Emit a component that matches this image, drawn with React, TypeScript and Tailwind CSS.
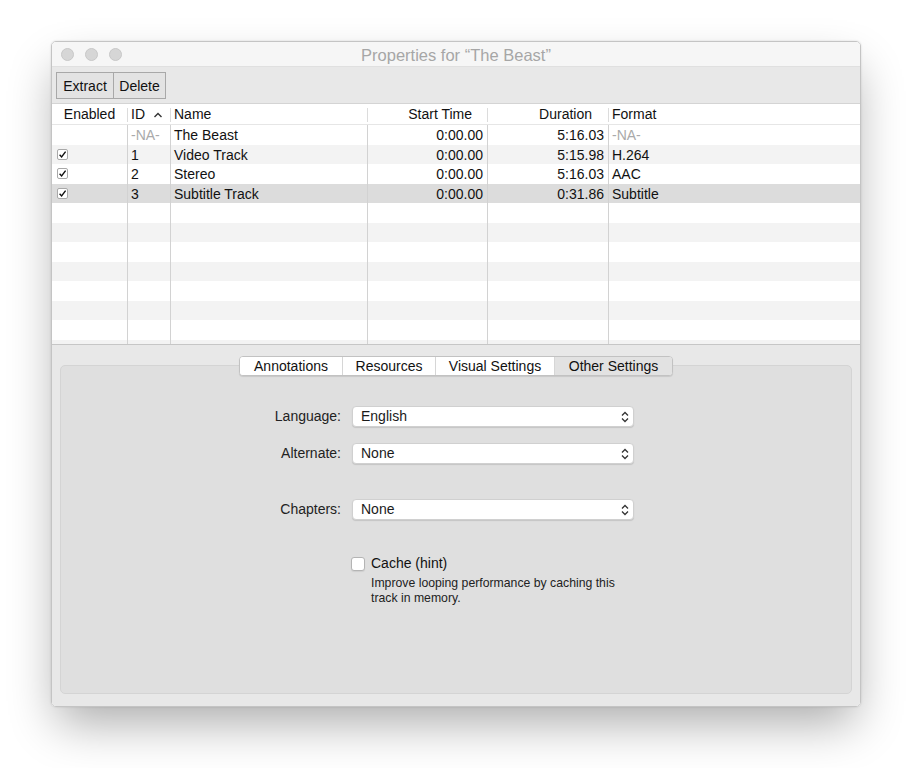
import React from 'react';

type Row = {
  enabled?: boolean;
  id?: string;
  name?: string;
  start?: string;
  duration?: string;
  format?: string;
  selected?: boolean;
};

const rows: Row[] = [
  { id: '-NA-', name: 'The Beast', start: '0:00.00', duration: '5:16.03', format: '-NA-' },
  { enabled: true, id: '1', name: 'Video Track', start: '0:00.00', duration: '5:15.98', format: 'H.264' },
  { enabled: true, id: '2', name: 'Stereo', start: '0:00.00', duration: '5:16.03', format: 'AAC' },
  { enabled: true, id: '3', name: 'Subtitle Track', start: '0:00.00', duration: '0:31.86', format: 'Subtitle', selected: true },
  {}, {}, {}, {}, {}, {}, {}, {},
];

const Check = () => (
  <span className="w-[11px] h-[11px] rounded-[2px] border border-[#a8a8a8] bg-white flex items-center justify-center">
    <svg width="9" height="9" viewBox="0 0 9 9">
      <path d="M1.6 4.8 L3.6 6.9 L7.6 1.6" fill="none" stroke="#111" strokeWidth="1.4" />
    </svg>
  </span>
);

const Chevrons = () => (
  <svg width="10" height="14" viewBox="0 0 10 14">
    <path d="M2 5.5 L5 2.5 L8 5.5" fill="none" stroke="#333" strokeWidth="1.3" />
    <path d="M2 8.5 L5 11.5 L8 8.5" fill="none" stroke="#333" strokeWidth="1.3" />
  </svg>
);

const Popup = ({ label, value }: { label: string; value: string }) => (
  <div className="flex items-center">
    <div className="w-[280px] text-right text-[14px] text-[#222]">{label}</div>
    <div className="ml-[11px] w-[282px] h-[21px] bg-white rounded-[4px] border border-[#d0d0d0] shadow-[0_1px_1px_rgba(0,0,0,0.12)] flex items-center justify-between pl-[8px] pr-[3px] text-[14px] text-[#1a1a1a]">
      <span>{value}</span>
      <Chevrons />
    </div>
  </div>
);

const tabs = [
  { label: 'Annotations', w: 'w-[102px]' },
  { label: 'Resources', w: 'w-[93px]' },
  { label: 'Visual Settings', w: 'w-[119px]' },
  { label: 'Other Settings', w: 'w-[118px]', active: true },
];

export default function App() {
  return (
    <div className="min-h-[768px] bg-white pl-[51px] pt-[41px] font-['Liberation_Sans','Arial',sans-serif]">
      <div className="w-[810px] h-[666px] rounded-[5px] border border-[#c4c4c4] overflow-hidden flex flex-col shadow-[0_22px_45px_-6px_rgba(0,0,0,0.33),0_0_2px_rgba(0,0,0,0.15)]">
        {/* Title bar */}
        <div className="h-[25px] bg-[#f6f6f6] border-b border-[#e0e0e0] flex items-center relative">
          <div className="flex gap-[11px] pl-[9px]">
            <span className="w-[13px] h-[13px] rounded-full bg-[#d6d6d6] border border-[#c8c8c8]" />
            <span className="w-[13px] h-[13px] rounded-full bg-[#d6d6d6] border border-[#c8c8c8]" />
            <span className="w-[13px] h-[13px] rounded-full bg-[#d6d6d6] border border-[#c8c8c8]" />
          </div>
          <div className="absolute inset-0 pt-[2px] flex items-center justify-center text-[16.5px] text-[#a6a6a6]">
            Properties for “The Beast”
          </div>
        </div>

        {/* Toolbar */}
        <div className="h-[37px] bg-[#e8e8e8] border-b border-[#d4d4d4] flex items-center pl-[4px]">
          <div className="flex h-[27px] border border-[#a8a8a8] bg-[#e3e3e3] text-[14px] text-[#111]">
            <div className="w-[57px] pt-[2px] flex items-center justify-center border-r border-[#a8a8a8]">Extract</div>
            <div className="w-[51px] pt-[2px] flex items-center justify-center">Delete</div>
          </div>
        </div>

        {/* Table */}
        <div className="h-[241px] bg-white border-b border-[#c6c6c6] overflow-hidden text-[14px] text-[#111]">
          <div className="h-[21px] pt-[1px] flex items-center border-b border-[#e6e6e6]">
            <div className="w-[75px] text-center">Enabled</div>
            <div className="w-[43px] flex items-center relative pl-[4px]">
              <span className="absolute left-0 w-px h-[14px] bg-[#dcdcdc]" />
              <span>ID</span>
              <svg className="ml-[8px]" width="10" height="8" viewBox="0 0 10 8">
                <path d="M1.5 6 L5 2.5 L8.5 6" fill="none" stroke="#333" strokeWidth="1.4" />
              </svg>
            </div>
            <div className="w-[197px] flex items-center relative pl-[4px]">
              <span className="absolute left-0 w-px h-[14px] bg-[#dcdcdc]" />
              Name
            </div>
            <div className="w-[120px] flex items-center justify-end relative pr-[15px]">
              <span className="absolute left-0 w-px h-[14px] bg-[#dcdcdc]" />
              Start Time
            </div>
            <div className="w-[121px] flex items-center justify-end relative pr-[16px]">
              <span className="absolute left-0 w-px h-[14px] bg-[#dcdcdc]" />
              Duration
            </div>
            <div className="flex-1 flex items-center relative pl-[4px]">
              <span className="absolute left-0 w-px h-[14px] bg-[#dcdcdc]" />
              Format
            </div>
          </div>
          {rows.map((r, i) => (
            <div
              key={i}
              className={`h-[19.5px] flex items-stretch ${
                r.selected ? 'bg-[#dcdcdc]' : i % 2 === 1 ? 'bg-[#f3f3f3]' : 'bg-white'
              }`}
            >
              <div className="w-[75px] flex items-center pl-[5px]">{r.enabled && <Check />}</div>
              <div className={`w-[43px] border-l border-[#d2d2d2] flex items-center pt-[2px] pl-[3px] ${r.id === '-NA-' ? 'text-[#aaaaaa]' : ''}`}>
                {r.id}
              </div>
              <div className="w-[197px] border-l border-[#d2d2d2] flex items-center pt-[2px] pl-[3px]">{r.name}</div>
              <div className="w-[120px] border-l border-[#d2d2d2] flex items-center justify-end pt-[2px] pr-[4px]">{r.start}</div>
              <div className="w-[121px] border-l border-[#d2d2d2] flex items-center justify-end pt-[2px] pr-[4px]">{r.duration}</div>
              <div className={`flex-1 border-l border-[#d2d2d2] flex items-center pt-[2px] pl-[3px] ${r.format === '-NA-' ? 'text-[#aaaaaa]' : ''}`}>
                {r.format}
              </div>
            </div>
          ))}
        </div>

        {/* Lower panel */}
        <div className="flex-1 bg-[#e8e8e8] pt-[11px] px-[8px] pb-[12px] flex flex-col">
          <div className="flex justify-center relative z-10">
            <div className="flex h-[20px] rounded-[4px] border border-[#c2c2c2] bg-white overflow-hidden shadow-[0_1px_1px_rgba(0,0,0,0.1)] text-[14px] text-[#111]">
              {tabs.map((t, i) => (
                <div
                  key={t.label}
                  className={`${t.w} pt-[1px] flex items-center justify-center ${i > 0 ? 'border-l border-[#d6d6d6]' : ''} ${
                    t.active ? 'bg-[#e2e2e2]' : 'bg-white'
                  }`}
                >
                  {t.label}
                </div>
              ))}
            </div>
          </div>
          <div className="flex-1 -mt-[11px] rounded-[5px] bg-[#dfdfdf] border border-[#d4d4d4] pt-[40px] flex flex-col">
            <Popup label="Language:" value="English" />
            <div className="h-[16px]" />
            <Popup label="Alternate:" value="None" />
            <div className="h-[35px]" />
            <Popup label="Chapters:" value="None" />
            <div className="pl-[290px] mt-[33px]">
              <div className="flex items-center gap-[6px]">
                <span className="w-[14px] h-[14px] rounded-[3px] bg-white border border-[#b4b4b4] shadow-[0_1px_1px_rgba(0,0,0,0.08)]" />
                <span className="text-[14px] text-[#111]">Cache (hint)</span>
              </div>
              <div className="pl-[20px] mt-[2px] w-[280px] text-[12.25px] leading-[15px] text-[#222]">
                Improve looping performance by caching this track in memory.
              </div>
            </div>
          </div>
        </div>
      </div>
    </div>
  );
}
